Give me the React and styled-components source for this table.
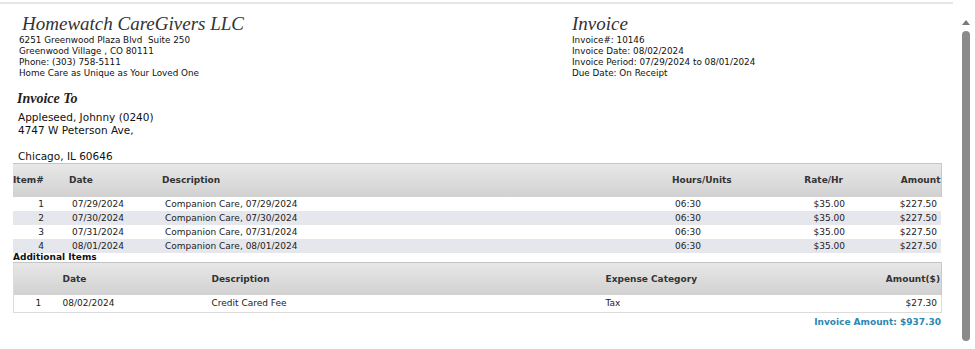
import React from "react";
import styled, { createGlobalStyle } from "styled-components";

const GlobalStyle = createGlobalStyle`
  html, body {
    margin: 0;
    padding: 0;
    background: #fff;
  }
  body {
    font-family: "DejaVu Sans", Verdana, sans-serif;
    color: #222;
  }
`;

const Page = styled.div`
  display: flex;
  width: 975px;
  height: 349px;
  overflow: hidden;
`;

const Main = styled.div`
  width: 953px;
  margin-top: 2px;
  border-top: 2px solid #e6e6e6;
`;

const ScrollTrack = styled.div`
  flex: 1;
  display: flex;
  flex-direction: column;
  align-items: center;
  padding-top: 20px;
  padding-left: 3px;
`;

const ScrollArrow = styled.div`
  width: 0;
  height: 0;
  border-left: 4px solid transparent;
  border-right: 4px solid transparent;
  border-bottom: 5px solid #7a7a7a;
`;

const ScrollThumb = styled.div`
  margin-top: 6px;
  width: 8px;
  height: 310px;
  border-radius: 4px;
  background: #8a8a8a;
`;

const Header = styled.header`
  display: flex;
  padding-top: 8px;
`;

const HeaderBlock = styled.div`
  width: ${(p) => p.$width || "auto"};
  padding-left: ${(p) => p.$indent || "0"};
`;

const Title = styled.h1`
  margin: 0 0 0 ${(p) => p.$shift || "0"};
  font-family: "Liberation Serif", "Times New Roman", serif;
  font-style: italic;
  font-weight: normal;
  font-size: 19px;
  line-height: 23px;
  color: #333;
`;

const InfoLine = styled.div`
  font-size: 8.8px;
  line-height: 11px;
  white-space: pre;
  color: #111;
`;

const BillTo = styled.section`
  padding: 12px 0 0 17px;
`;

const BillToTitle = styled.h2`
  margin: 0 0 4px;
  font-family: "Liberation Serif", "Times New Roman", serif;
  font-style: italic;
  font-weight: bold;
  font-size: 14px;
  line-height: 16px;
  color: #222;
`;

const AddressLine = styled.div`
  font-size: 10.5px;
  line-height: 13px;
  min-height: 13px;
  padding-left: 1px;
  color: #111;
`;

const Table = styled.table`
  margin-left: 13px;
  width: 928px;
  border-collapse: collapse;
  table-layout: fixed;
  font-size: 9px;
  border: ${(p) => (p.$boxed ? "1px solid #dcdcdc" : "none")};
  border-top: 1px solid #c4c4c4;
`;

const HeadRow = styled.tr`
  height: ${(p) => p.$height || "32px"};
  background: linear-gradient(#e8e8e8, #d1d1d1);
  border-right: 1px solid #c8c8c8;
`;

const Th = styled.th`
  padding: 0 ${(p) => p.$padRight || "0"} 0 ${(p) => p.$padLeft || "0"};
  text-align: ${(p) => p.$align || "left"};
  font-weight: bold;
  color: #333;
  white-space: nowrap;
`;

const Row = styled.tr`
  height: ${(p) => p.$height || "14px"};
  background: ${(p) => (p.$shaded ? "#e6e7ec" : "#fff")};
`;

const Td = styled.td`
  padding: 0 ${(p) => p.$padRight || "0"} 0 ${(p) => p.$padLeft || "0"};
  text-align: ${(p) => p.$align || "left"};
  color: #222;
  white-space: nowrap;
  line-height: 10px;
`;

const SectionLabel = styled.div`
  margin: 0 0 0 13px;
  font-size: 9px;
  line-height: 9px;
  font-weight: bold;
  color: #111;
`;

const Total = styled.div`
  width: 941px;
  text-align: right;
  padding-top: 4px;
  font-size: 9px;
  font-weight: bold;
  color: #2b87b3;
`;

const lines = [
  { n: 1, date: "07/29/2024" },
  { n: 2, date: "07/30/2024" },
  { n: 3, date: "07/31/2024" },
  { n: 4, date: "08/01/2024" },
];

export default function App() {
  return (
    <>
      <GlobalStyle />
      <Page>
        <Main>
          <Header>
            <HeaderBlock $width="553px" $indent="19px">
              <Title $shift="3px">Homewatch CareGivers LLC</Title>
              <InfoLine>6251 Greenwood Plaza Blvd  Suite 250</InfoLine>
              <InfoLine>Greenwood Village , CO 80111</InfoLine>
              <InfoLine>Phone: (303) 758-5111</InfoLine>
              <InfoLine>Home Care as Unique as Your Loved One</InfoLine>
            </HeaderBlock>
            <HeaderBlock>
              <Title>Invoice</Title>
              <InfoLine>Invoice#: 10146</InfoLine>
              <InfoLine>Invoice Date: 08/02/2024</InfoLine>
              <InfoLine>Invoice Period: 07/29/2024 to 08/01/2024</InfoLine>
              <InfoLine>Due Date: On Receipt</InfoLine>
            </HeaderBlock>
          </Header>

          <BillTo>
            <BillToTitle>Invoice To</BillToTitle>
            <AddressLine>Appleseed, Johnny (0240)</AddressLine>
            <AddressLine>4747 W Peterson Ave,</AddressLine>
            <AddressLine />
            <AddressLine>Chicago, IL 60646</AddressLine>
          </BillTo>

          <Table>
            <colgroup>
              <col style={{ width: 56 }} />
              <col style={{ width: 93 }} />
              <col style={{ width: 510 }} />
              <col style={{ width: 98 }} />
              <col style={{ width: 75 }} />
              <col style={{ width: 96 }} />
            </colgroup>
            <thead>
              <HeadRow $height="33px">
                <Th>Item#</Th>
                <Th>Date</Th>
                <Th>Description</Th>
                <Th>Hours/Units</Th>
                <Th $align="right" $padRight="2px">Rate/Hr</Th>
                <Th $align="right">Amount</Th>
              </HeadRow>
            </thead>
            <tbody>
              {lines.map((l, i) => (
                <Row key={l.n} $shaded={i % 2 === 1}>
                  <Td $align="center">{l.n}</Td>
                  <Td $padLeft="3px">{l.date}</Td>
                  <Td $padLeft="3px">Companion Care, {l.date}</Td>
                  <Td $padLeft="3px">06:30</Td>
                  <Td $align="right">$35.00</Td>
                  <Td $align="right" $padRight="4px">$227.50</Td>
                </Row>
              ))}
            </tbody>
          </Table>

          <SectionLabel>Additional Items</SectionLabel>

          <Table $boxed>
            <colgroup>
              <col style={{ width: 49 }} />
              <col style={{ width: 149 }} />
              <col style={{ width: 394 }} />
              <col style={{ width: 200 }} />
              <col style={{ width: 136 }} />
            </colgroup>
            <thead>
              <HeadRow $height="33px">
                <Th />
                <Th>Date</Th>
                <Th>Description</Th>
                <Th>Expense Category</Th>
                <Th $align="right" $padRight="1px">Amount($)</Th>
              </HeadRow>
            </thead>
            <tbody>
              <Row $height="17px">
                <Td $align="center">1</Td>
                <Td>08/02/2024</Td>
                <Td>Credit Cared Fee</Td>
                <Td>Tax</Td>
                <Td $align="right" $padRight="4px">$27.30</Td>
              </Row>
            </tbody>
          </Table>

          <Total>Invoice Amount: $937.30</Total>
        </Main>
        <ScrollTrack>
          <ScrollArrow />
          <ScrollThumb />
        </ScrollTrack>
      </Page>
    </>
  );
}
